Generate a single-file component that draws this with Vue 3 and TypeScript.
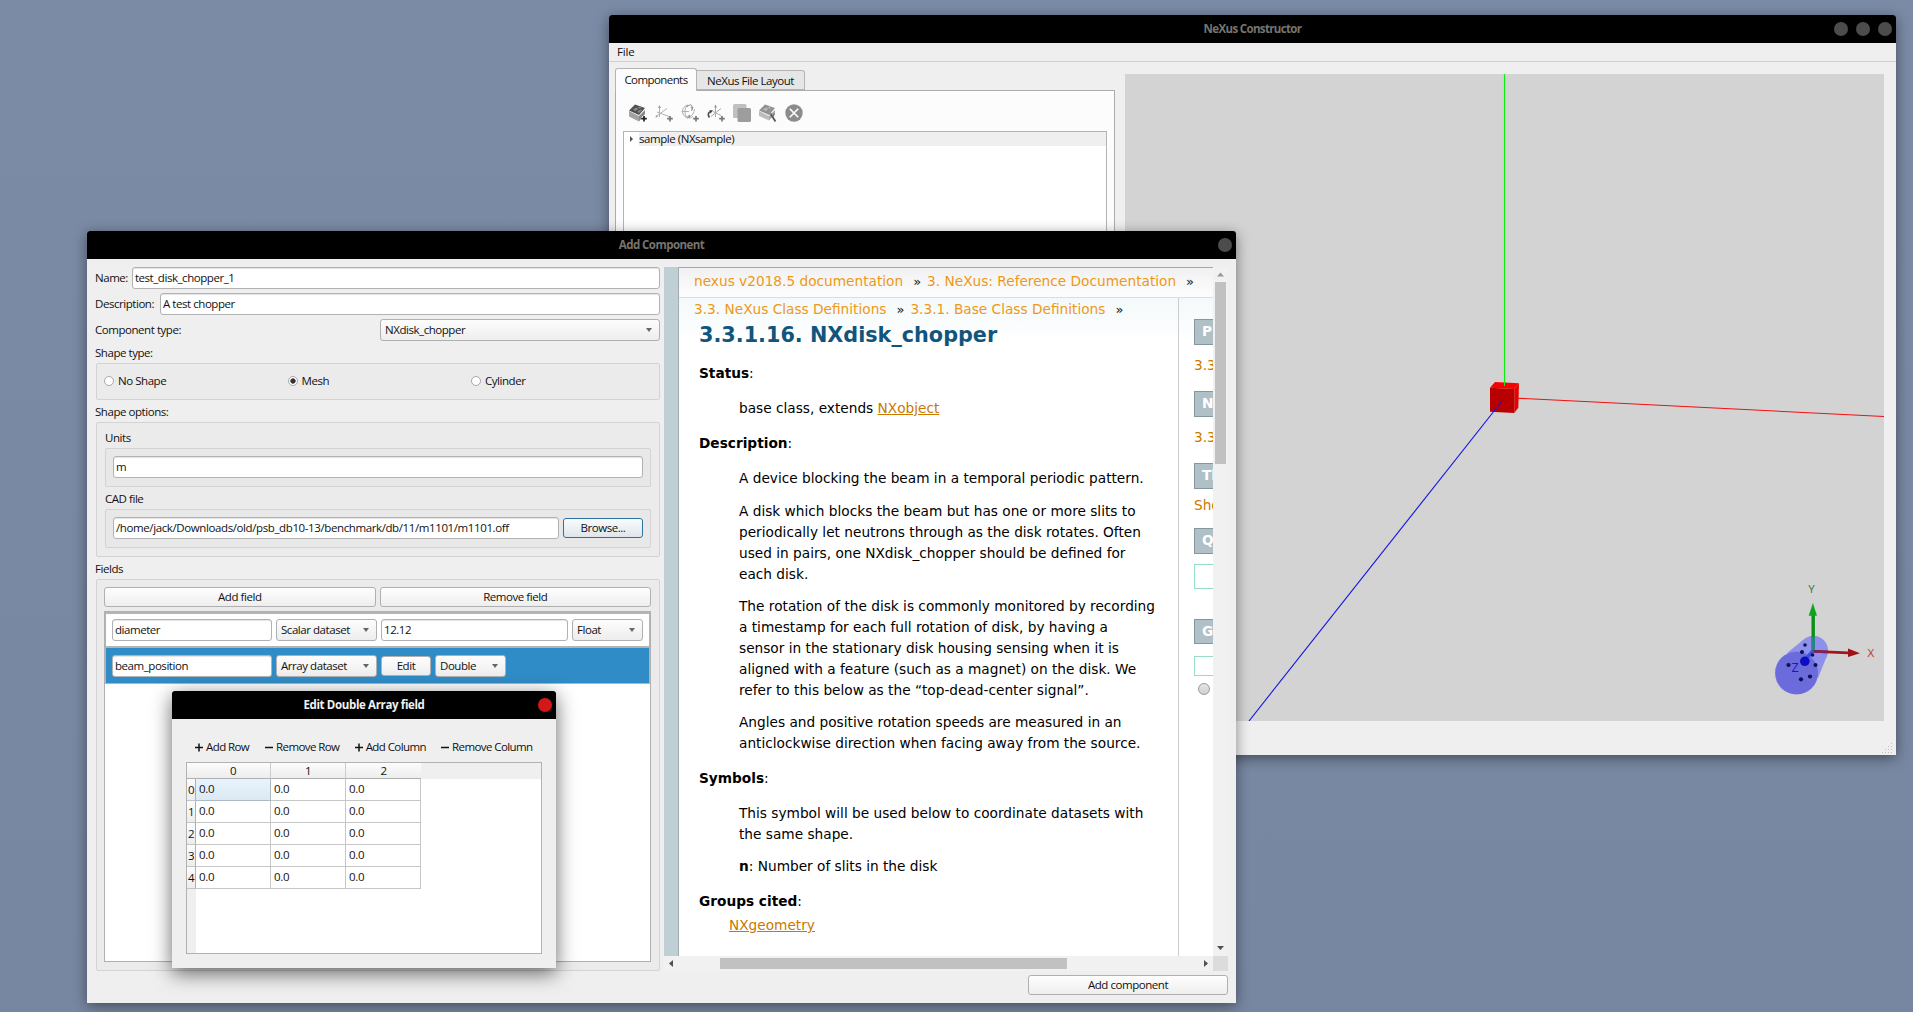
<script setup lang="ts">
import { ref } from 'vue'

const shapes = ['No Shape', 'Mesh', 'Cylinder']
const shape = ref('Mesh')
const columns = [0, 1, 2]
const rows = [0, 1, 2, 3, 4]
const actions = [
  { sign: '+', label: 'Add Row', w: 55 },
  { sign: '-', label: 'Remove Row', w: 75 },
  { sign: '+', label: 'Add Column', w: 71 },
  { sign: '-', label: 'Remove Column', w: 92 },
]
const description: string[][] = [
  ['A device blocking the beam in a temporal periodic pattern.'],
  [
    'A disk which blocks the beam but has one or more slits to',
    'periodically let neutrons through as the disk rotates. Often',
    'used in pairs, one NXdisk_chopper should be defined for',
    'each disk.',
  ],
  [
    'The rotation of the disk is commonly monitored by recording',
    'a timestamp for each full rotation of disk, by having a',
    'sensor in the stationary disk housing sensing when it is',
    'aligned with a feature (such as a magnet) on the disk. We',
    'refer to this below as the “top-dead-center signal”.',
  ],
  [
    'Angles and positive rotation speeds are measured in an',
    'anticlockwise direction when facing away from the source.',
  ],
]
const symbols: string[] = ['This symbol will be used below to coordinate datasets with', 'the same shape.']
</script>

<template>
  <div class="desktop">
    <!-- Main window -->
    <section class="window main">
      <header class="title">
        <span class="tt nexus">NeXus Constructor</span>
        <div class="dots"><i></i><i></i><i></i></div>
      </header>
      <nav class="menubar"><span>File</span></nav>
      <div class="body">
        <div class="left">
          <div class="tabs">
            <div class="tab active">Components</div>
            <div class="tab">NeXus File Layout</div>
          </div>
          <div class="pane">
            <div class="toolbar">
              <svg width="20" height="20" viewBox="0 0 20 20">
                <path d="M1 8 11 13 11 18.500 1 13.500Z" fill="#a2a2a2" /><path d="M11 13 17 7 17 11 11 18.500Z" fill="#8a8a8a" />
                <path d="M1 7.500 7 1.500 17 5 11 12Z" fill="#505050" />
                <path d="M5 6.500 8 4.500 10.500 6 7.500 8ZM10 4 12 3.800 13.500 5 11 5.500ZM9.500 8.500 12.500 6.500 14 7 11 10Z" fill="#8b8b8b" />
                <path d="M16 13v5.500M13.200 15.700h5.600" stroke="#fcfcfc" stroke-width="3.600" /><path d="M16 13v5.500M13.200 15.700h5.600" stroke="#222" stroke-width="1.700" />
              </svg>
              <svg width="20" height="20" viewBox="0 0 20 20">
                <path d="M5.500 14V3M2 13.500 13 5.500M3 9 15 13.500" stroke="#b2b2b2" fill="none" /><path d="M4 5 5.500 2 7 5ZM2 12 1.500 14.500 4 14Z" fill="#9c9c9c" />
                <path d="M16 13v5.500M13.200 15.700h5.600" stroke="#777" stroke-width="1.700" />
              </svg>
              <svg width="20" height="20" viewBox="0 0 20 20">
                <g fill="none" stroke="#b0b0b0"><path d="M8 2A6.500 6.500 0 1 0 13 13.500M1.500 8.500H9M8 2C4 4 4 13 8 15.500" /><path d="M7 4C10 0 14 2 11.500 8" stroke="#8d8d8d" /><path d="M10 13.500C13 12 14 10 14.500 6" /></g>
                <path d="M7 13.500 10 11.500V15.500ZM10.500 4 13.500 4 12.500 7Z" fill="#999" />
                <path d="M16 13v5.500M13.200 15.700h5.600" stroke="#777" stroke-width="1.700" />
              </svg>
              <svg width="20" height="20" viewBox="0 0 20 20">
                <path d="M9.500 14V2M5 13.500 15 5.500M7 8.500 15 12.500" stroke="#aaa" fill="none" /><path d="M8 4.500 9.500 1.500 11 4.500Z" fill="#999" />
                <path d="M5 8.500C2 9 1.500 12 3.500 14.500" stroke="#444" stroke-width="1.600" fill="none" /><path d="M3.500 7 7 7.500 4.500 10.500Z" fill="#444" />
                <path d="M16 13v5.500M13.200 15.700h5.600" stroke="#777" stroke-width="1.700" />
              </svg>
              <svg width="20" height="20" viewBox="0 0 20 20">
                <rect x="1" y="1" width="13.500" height="14" rx="1.500" fill="#c0c0c0" /><rect x="5.500" y="5" width="13.500" height="14" rx="1.500" fill="#9d9d9d" />
              </svg>
              <svg width="20" height="20" viewBox="0 0 20 20">
                <path d="M1 8 11 13 11 17.500 1 13Z" fill="#bcbcbc" /><path d="M11 13 17 7 17 11 11 17.500Z" fill="#aaa" /><path d="M1 7.500 7 1.500 17 5 11 12Z" fill="#929292" />
                <path d="M5 6.500 8 4.500 10.500 6 7.500 8ZM10 4 12 3.800 13.500 5 11 5.500Z" fill="#b9b9b9" />
                <path d="M13 11.500 17.500 18.500" stroke="#555" stroke-width="1.800" /><path d="M12 12 13.500 10M15 13.500 16.500 10.500" stroke="#777" stroke-width="1.400" />
              </svg>
              <svg width="20" height="20" viewBox="0 0 20 20">
                <circle cx="10" cy="10" r="8.700" fill="#8c8c8c" /><path d="M5.800 5.800 14.200 14.200M14.200 5.800 5.800 14.200" stroke="#fff" stroke-width="1.600" />
              </svg>
            </div>
            <div class="tree">
              <div class="node"><svg width="15" height="14" viewBox="0 0 15 14"><path d="M6 4 9 7 6 10Z" fill="#555" /></svg><span>sample (NXsample)</span></div>
            </div>
          </div>
        </div>
        <svg class="scene" width="759" height="647" viewBox="1125 74 759 647">
          <path d="M1504.500 74V386" stroke="#10ee10" stroke-width="1.100" />
          <path d="M1518 398.200 1884 416.500" stroke="#f21010" stroke-width="1.100" />
          <path d="M1495 382 1519 383.300 1514.300 389 1490 387.700Z" fill="#fb0000" />
          <path d="M1514.300 389 1519 383.300 1518.300 407.700 1514.300 413Z" fill="#e60000" />
          <path d="M1490 387.700 1514.300 389 1514.300 413 1490 411.700Z" fill="#b90000" />
          <path d="M1504.500 381V386" stroke="#10ee10" stroke-width="1.100" />
          <path d="M1502 401 1249 721" stroke="#1212e6" stroke-width="1.100" />
          <!-- Orientation gizmo -->
          <path d="M1787 653 1805 638.500A14.600 14.600 0 0 1 1827.300 655L1818 678Z" fill="#8e91ec" />
          <circle cx="1813" cy="651" r="14.800" fill="#8e91ec" />
          <circle cx="1796.500" cy="673" r="21.500" fill="#7477e3" />
          <circle cx="1796.800" cy="673" r="21" fill="#6b6bdc" />
          <path d="M1811.500 615h3.400V651h-3.400Z" fill="#0b8f18" /><path d="M1811.500 637h3.400V651h-3.400Z" fill="#2f7f8c" />
          <path d="M1812.900 603 1817 615.700H1808.700Z" fill="#0da51c" />
          <path d="M1813.500 650 1848.500 651.500V654.200L1813.500 652.700Z" fill="#a51418" />
          <path d="M1813.500 650 1827.500 650.600V653.300L1813.500 652.700Z" fill="#7a2560" />
          <path d="M1860 653.300 1848 648.500V657Z" fill="#a01015" />
          <path d="M1813 651 1804 661" stroke="#3b50dc" stroke-width="3.500" />
          <g fill="#101055"><circle cx="1805" cy="645" r="1.800" /><circle cx="1802" cy="652" r="2" /><circle cx="1788.500" cy="665" r="2.100" /><circle cx="1815.500" cy="665" r="2" /><circle cx="1801" cy="679.300" r="2.100" /><circle cx="1810" cy="676.500" r="2.100" /><circle cx="1812.500" cy="655" r="1.800" /></g>
          <circle cx="1804.800" cy="661.300" r="4.800" fill="#0d0dc4" />
          <text x="1808.200" y="593" fill="#2f7d32">Y</text><text x="1867.500" y="656.500" fill="#c33030">X</text><text x="1791.500" y="672" fill="#1717c8" font-size="12.500">Z</text>
        </svg>
      </div>
      <svg class="grip" width="12" height="12" viewBox="0 0 12 12" fill="#bdbdbd">
        <path d="M9 0h1v1h-1zM6 3h1v1h-1zM9 3h1v1h-1zM3 6h1v1h-1zM6 6h1v1h-1zM9 6h1v1h-1zM0 9h1v1h-1zM3 9h1v1h-1zM6 9h1v1h-1zM9 9h1v1h-1z" />
      </svg>
    </section>

    <!-- Add component window -->
    <section class="window add">
      <header class="title"><span class="tt">Add Component</span><div class="dots"><i></i></div></header>
      <div class="cols">
        <div class="form">
          <div class="line"><label>Name:</label><div class="input grow">test_disk_chopper_1</div></div>
          <div class="line"><label class="desc">Description:</label><div class="input grow">A test chopper</div></div>
          <div class="line spread"><label>Component type:</label><div class="combo wide"><span>NXdisk_chopper</span><b></b></div></div>
          <label class="cap gap">Shape type:</label>
          <div class="group radios">
            <div v-for="s in shapes" :key="s" class="radio"><i :class="{ on: s === shape }"></i>{{ s }}</div>
          </div>
          <label class="cap gap">Shape options:</label>
          <div class="group options">
            <label class="cap u">Units</label>
            <div class="group inner"><div class="input grow">m</div></div>
            <label class="cap c">CAD file</label>
            <div class="group inner">
              <div class="input grow path">/home/jack/Downloads/old/psb_db10-13/benchmark/db/11/m1101/m1101.off</div>
              <div class="btn browse">Browse...</div>
            </div>
          </div>
          <label class="cap gap">Fields</label>
          <div class="group fields">
            <div class="line btns"><div class="btn">Add field</div><div class="btn">Remove field</div></div>
            <div class="list">
              <div class="item first">
                <div class="input n">diameter</div><div class="combo k"><span>Scalar dataset</span><b></b></div>
                <div class="input v">12.12</div><div class="combo t"><span>Float</span><b></b></div>
              </div>
              <div class="item sel">
                <div class="input n">beam_position</div><div class="combo k"><span>Array dataset</span><b></b></div>
                <div class="btn edit">Edit</div><div class="combo t"><span>Double</span><b></b></div>
              </div>
            </div>
          </div>
        </div>
        <div class="right">
          <div class="browser">
            <div class="view">
              <div class="page">
                <div class="crumbs top"><a>nexus v2018.5 documentation</a><s>»</s><a>3. NeXus: Reference Documentation</a><s>»</s></div>
                <div class="docrow">
                  <article class="doc">
                    <div class="crumbs"><a>3.3. NeXus Class Definitions</a><s>»</s><a>3.3.1. Base Class Definitions</a><s>»</s></div>
                    <h1>3.3.1.16. NXdisk_chopper</h1>
                    <p class="h"><strong>Status</strong>:</p>
                    <p class="in">base class, extends <a>NXobject</a></p>
                    <p class="h"><strong>Description</strong>:</p>
                    <p v-for="(p, i) in description" :key="i" class="in" :class="{ tight: i > 0, second: i === 1 }">
                      <span v-for="l in p" :key="l">{{ l }}</span>
                    </p>
                    <p class="h"><strong>Symbols</strong>:</p>
                    <p class="in"><span v-for="l in symbols" :key="l">{{ l }}</span></p>
                    <p class="in tight"><strong>n</strong>: Number of slits in the disk</p>
                    <p class="h"><strong>Groups cited</strong>:</p>
                    <p class="cite"><a>NXgeometry</a></p>
                  </article>
                  <aside class="side">
                    <h3>P</h3><a>3.3</a>
                    <h3>N</h3><a>3.3</a>
                    <h3>Th</h3><a class="sh">Sho</a>
                    <h3>Q</h3><div class="box"></div>
                    <h3 class="g">G</h3><div class="box small"></div><i></i>
                  </aside>
                </div>
              </div>
            </div>
            <div class="vbar"><svg width="15" height="15"><path d="M4 9.500 7.500 5.500 11 9.500Z" fill="#999" /></svg><div class="vthumb"></div><svg width="15" height="15"><path d="M4 5 11 5 7.500 9Z" fill="#505050" /></svg></div>
            <div class="hbar"><svg width="15" height="15"><path d="M9 4 9 11 5 7.500Z" fill="#505050" /></svg><div class="hthumb"></div><svg width="15" height="15"><path d="M6 4 6 11 10 7.500Z" fill="#505050" /></svg></div>
            <div class="corner"></div>
          </div>
          <div class="btn addc">Add component</div>
        </div>
      </div>
    </section>

    <!-- Array dialog -->
    <section class="window array">
      <header class="title live"><span class="tt">Edit Double Array field</span><div class="dots"><i></i></div></header>
      <div class="acts">
        <div v-for="a in actions" :key="a.label" class="act" :style="{ width: a.w + 'px' }">
          <svg width="8" height="10"><path :d="a.sign === '+' ? 'M0 5.500h8M4 1.500v8' : 'M0 5.500h8'" stroke="#111" stroke-width="1.500" /></svg>{{ a.label }}
        </div>
      </div>
      <div class="table">
        <div class="thead"><i></i><div v-for="c in columns" :key="c">{{ c }}</div></div>
        <div class="tbody">
          <div class="vh"><div v-for="r in rows" :key="r">{{ r }}</div></div>
          <div class="cells">
            <div v-for="r in rows" :key="r" class="tr"><div v-for="c in columns" :key="c" :class="{ cur: r === 0 && c === 0 }">0.0</div></div>
          </div>
        </div>
      </div>
    </section>
  </div>
</template>

<style>
body { margin: 0; overflow: hidden; }
</style>

<style scoped>
* { box-sizing: border-box; }
.desktop { position: relative; width: 1913px; height: 1012px; overflow: hidden; background: linear-gradient(180deg, #7b8ba6, #7787a1); font: 11.500px/16px "Open Sans", "Noto Sans", sans-serif; letter-spacing: -0.45px; color: #111; }
.window { position: absolute; display: flex; flex-direction: column; background: #efefef; border-radius: 3px 3px 0 0; box-shadow: 0 3px 14px rgba(0, 0, 0, 0.45); }
.main { left: 609px; top: 15px; width: 1287px; height: 740px; }
.add { left: 87px; top: 231px; width: 1149px; height: 772px; }
.array { left: 172px; top: 691px; width: 384px; height: 277px; box-shadow: 0 5px 20px rgba(0, 0, 0, 0.6); }
.title { position: relative; flex: none; height: 28px; background: #000; border-radius: 3px 3px 0 0; display: flex; align-items: center; justify-content: center; font-weight: 700; color: #77746f; letter-spacing: -0.55px; }
.nexus { letter-spacing: -0.65px; }
.live { color: #f2f2f2; letter-spacing: -0.36px; }
.dots { position: absolute; right: 4px; top: 7px; display: flex; gap: 8px; }
.dots i { width: 14px; height: 14px; border-radius: 50%; background: #4c4c4c; }
.live .dots i { background: #d31818; }
.menubar { flex: none; height: 19px; border-bottom: 1px solid #d0d0d0; padding: 1px 8px; letter-spacing: -0.2px; }
.body { display: flex; gap: 10px; padding: 6px 0 0 6px; }
.left { width: 500px; height: 654px; display: flex; flex-direction: column; }
.tabs { display: flex; align-items: flex-end; height: 23px; margin-bottom: -1px; z-index: 1; }
.tab { height: 20px; width: 108px; margin-bottom: 1px; border: 1px solid #b4b4b4; border-left: 0; background: #e6e6e6; border-radius: 0 3px 0 0; text-align: center; line-height: 19px; }
.tab.active { height: 23px; width: 82px; margin-bottom: 0; border: 1px solid #b4b4b4; border-bottom: 0; background: #fcfcfc; border-radius: 3px 3px 0 0; line-height: 21px; letter-spacing: -0.58px; }
.pane { flex: 1; border: 1px solid #acacac; background: #fcfcfc; padding: 12px 7px 8px; display: flex; flex-direction: column; }
.toolbar { display: flex; gap: 6px; padding-left: 5px; height: 28px; }
.tree { flex: 1; border: 1px solid #b4b4b4; background: #fff; }
.node { display: flex; height: 14px; line-height: 14px; }
.node span { flex: 1; background: #efefef; letter-spacing: -0.45px; }
.node svg, .toolbar svg { flex: none; }
.scene { flex: none; margin-top: 6px; background: #d3d3d3; font: 11.500px "Open Sans", sans-serif; letter-spacing: 0; }
.grip { position: absolute; right: 2px; bottom: 0; }

.cols { flex: 1; display: flex; padding: 8px 8px 0; }
.form { flex: none; width: 565px; display: flex; flex-direction: column; }
.line { display: flex; gap: 4px; height: 22px; margin-bottom: 4px; line-height: 22px; }
.line label { flex: none; }
.desc { width: 61px; }
.spread { justify-content: space-between; margin-bottom: 0; }
.input { height: 22px; border: 1px solid #b2b2b2; border-radius: 3px; background: #fff; padding-left: 2px; line-height: 20px; white-space: nowrap; box-shadow: inset 0 1px 1px #e4e4e4; }
.grow { flex: 1; }
.path { letter-spacing: -0.39px; }
.combo { height: 22px; border: 1px solid #b0b0b0; border-radius: 3px; background: linear-gradient(#fdfdfd, #ededed); padding: 0 7px 0 4px; line-height: 20px; display: flex; align-items: center; justify-content: space-between; white-space: nowrap; }
.combo b { border: 3px solid transparent; border-top: 4px solid #666; border-bottom: 0; }
.combo.wide { width: 280px; }
.btn { height: 20px; border: 1px solid #b0b0b0; border-radius: 3px; background: linear-gradient(#fefefe, #eee); text-align: center; line-height: 18px; }
.cap { display: block; height: 16px; }
.gap { margin-top: 4px; }
.group { border: 1px solid #d3d3d3; border-radius: 2px; background: #ebebeb; margin-left: 1px; }
.radios { margin-top: 2px; height: 37px; padding: 0 0 2px 7px; display: flex; align-items: center; }
.radio { width: 183.500px; display: flex; align-items: center; gap: 4px; }
.radio i { width: 10px; height: 10px; border-radius: 50%; border: 1px solid #a8a8a8; background: #fff; }
.radio i.on { background: radial-gradient(circle, #333 0 2.300px, #fff 3px); }
.options { margin-top: 2px; height: 135px; padding: 7px 8px; }
.inner { display: flex; gap: 4px; height: 39px; padding: 7px; background: #e8e8e8; margin-left: 0; }
.u { height: 18px; }
.c { height: 18px; margin-top: 4px; }
.browse { width: 80px; margin-top: 1px; border-color: #2b749f; background: linear-gradient(#fafcfd, #dfe5ea); }
.fields { margin-top: 2px; height: 392px; padding: 7px 8px 8px 7px; display: flex; flex-direction: column; }
.btns { height: 20px; flex: none; }
.btns .btn { flex: 1; }
.list { flex: 1; border: 1px solid #b0b0b0; background: #fff; }
.item { display: flex; gap: 4px; height: 36px; padding: 5px 6px; border: 2px solid #b4b4b4; border-left-width: 1px; border-right-width: 1px; }
.item.sel { background: #308cc6; border-top: 0; border-bottom: 1px solid #b4b4b4; height: 36px; padding-top: 7px; }
.item .btn { height: 20px; margin-top: 1px; }
.n { width: 160px; }
.k { width: 101px; }
.v { width: 187px; }
.t { width: 71px; }
.edit { width: 50px; }

.right { flex: none; width: 568px; padding-left: 4px; display: flex; flex-direction: column; align-items: flex-end; }
.browser { display: grid; grid-template-columns: 549px 15px; grid-template-rows: 689px 15px; }
.view { overflow: hidden; background: #bfcfd4; padding-left: 14px; }
.page { width: 700px; height: 689px; border-left: 1px solid #9fadb3; border-top: 1px solid #a8a8a8; background: #fff; font: 13.700px/21px "DejaVu Sans", sans-serif; letter-spacing: 0; color: #000; }
.crumbs { display: flex; align-items: center; padding-left: 15px; white-space: nowrap; color: #111; }
.crumbs a { color: #ee9816; }
.crumbs s { text-decoration: none; margin: 0 6px 0 10px; font-size: 13px; }
.crumbs.top { height: 30px; background: linear-gradient(#f1f1f3, #fdfdfd); border-bottom: 1px solid #d9dfde; padding-bottom: 2px; }
.docrow { display: flex; height: 660px; background: linear-gradient(#f3f9fa, #fff 44px); }
.doc { width: 500px; border-right: 1px solid #ccc; }
.doc .crumbs { height: 22px; }
h1 { margin: 1px 0 14px 20px; font: bold 20.750px/28px "DejaVu Sans", sans-serif; color: #11557c; white-space: nowrap; }
p { margin: 0 0 14px; white-space: nowrap; }
p span { display: block; }
.h { padding-left: 20px; }
.in { padding-left: 60px; }
.tight { margin-top: -3px; }
.second { margin-top: -2px; }
.cite { padding-left: 50px; margin-top: -11px; }
p a { color: #ca7900; text-decoration: underline; }
.side { padding: 21px 0 0 15px; }
.side h3 { margin: 0; width: 120px; height: 26px; border: 1px solid #86989f; background: #afc1c7; color: #fff; font: bold 13.700px/23px "DejaVu Sans", sans-serif; padding-left: 7px; }
.side a { display: block; height: 46px; padding-top: 10px; color: #ca7900; }
.side .sh { height: 39px; padding-top: 6px; }
.box { width: 120px; height: 25px; margin-top: 10px; border: 1px solid #98dcc8; background: #fff; }
.side .g { margin-top: 30px; height: 25px; }
.box.small { height: 20px; margin-top: 12px; }
.side i { display: block; width: 12px; height: 12px; border-radius: 50%; border: 1px solid #999; background: linear-gradient(#e6e6e6, #d0d0d0); margin: 7px 0 0 4px; }
.vbar { background: #f1f1f1; display: flex; flex-direction: column; }
.vthumb { width: 11px; height: 182px; margin: 0 0 477px 2px; background: #c1c1c1; flex: none; }
.vbar svg { flex: none; }
.hbar { background: #f1f1f1; display: flex; justify-content: space-between; align-items: center; }
.hthumb { width: 347px; height: 11px; background: #c1c1c1; margin-right: 91px; }
.corner { background: #dcdcdc; }
.addc { width: 200px; margin-top: 4px; }

.acts { display: flex; gap: 15px; padding: 20px 0 0 23px; height: 43px; }
.act { display: flex; align-items: center; gap: 3px; height: 16px; white-space: nowrap; letter-spacing: -0.58px; }
.table { margin: 0 14px; height: 192px; border: 1px solid #b2b2b2; background: #fff; display: flex; flex-direction: column; }
.thead { display: flex; height: 16px; background: #efefef; flex: none; }
.thead i { width: 9px; background: linear-gradient(#fcfcfc, #ededed); border-bottom: 1px solid #b0b0b0; }
.thead div { width: 75px; background: linear-gradient(#fcfcfc, #ededed); border-right: 1px solid #cdcdcd; border-bottom: 1px solid #b0b0b0; text-align: center; line-height: 15px; }
.thead div:last-child { border-right: 0; }
.tbody { flex: 1; display: flex; }
.vh { width: 9px; background: #efefef; }
.vh div { height: 22px; border-bottom: 1px solid #c4c4c4; border-right: 1px solid #b0b0b0; background: linear-gradient(#fcfcfc, #ededed); line-height: 21px; text-align: center; }
.tr { display: flex; }
.tr div { width: 75px; height: 22px; border-right: 1px solid #c6c6c6; border-bottom: 1px solid #c6c6c6; padding-left: 3px; line-height: 20px; letter-spacing: -0.3px; }
.tr .cur { background: linear-gradient(#e8f4fd, #dde9f2); border-color: #abbac5; }
</style>
